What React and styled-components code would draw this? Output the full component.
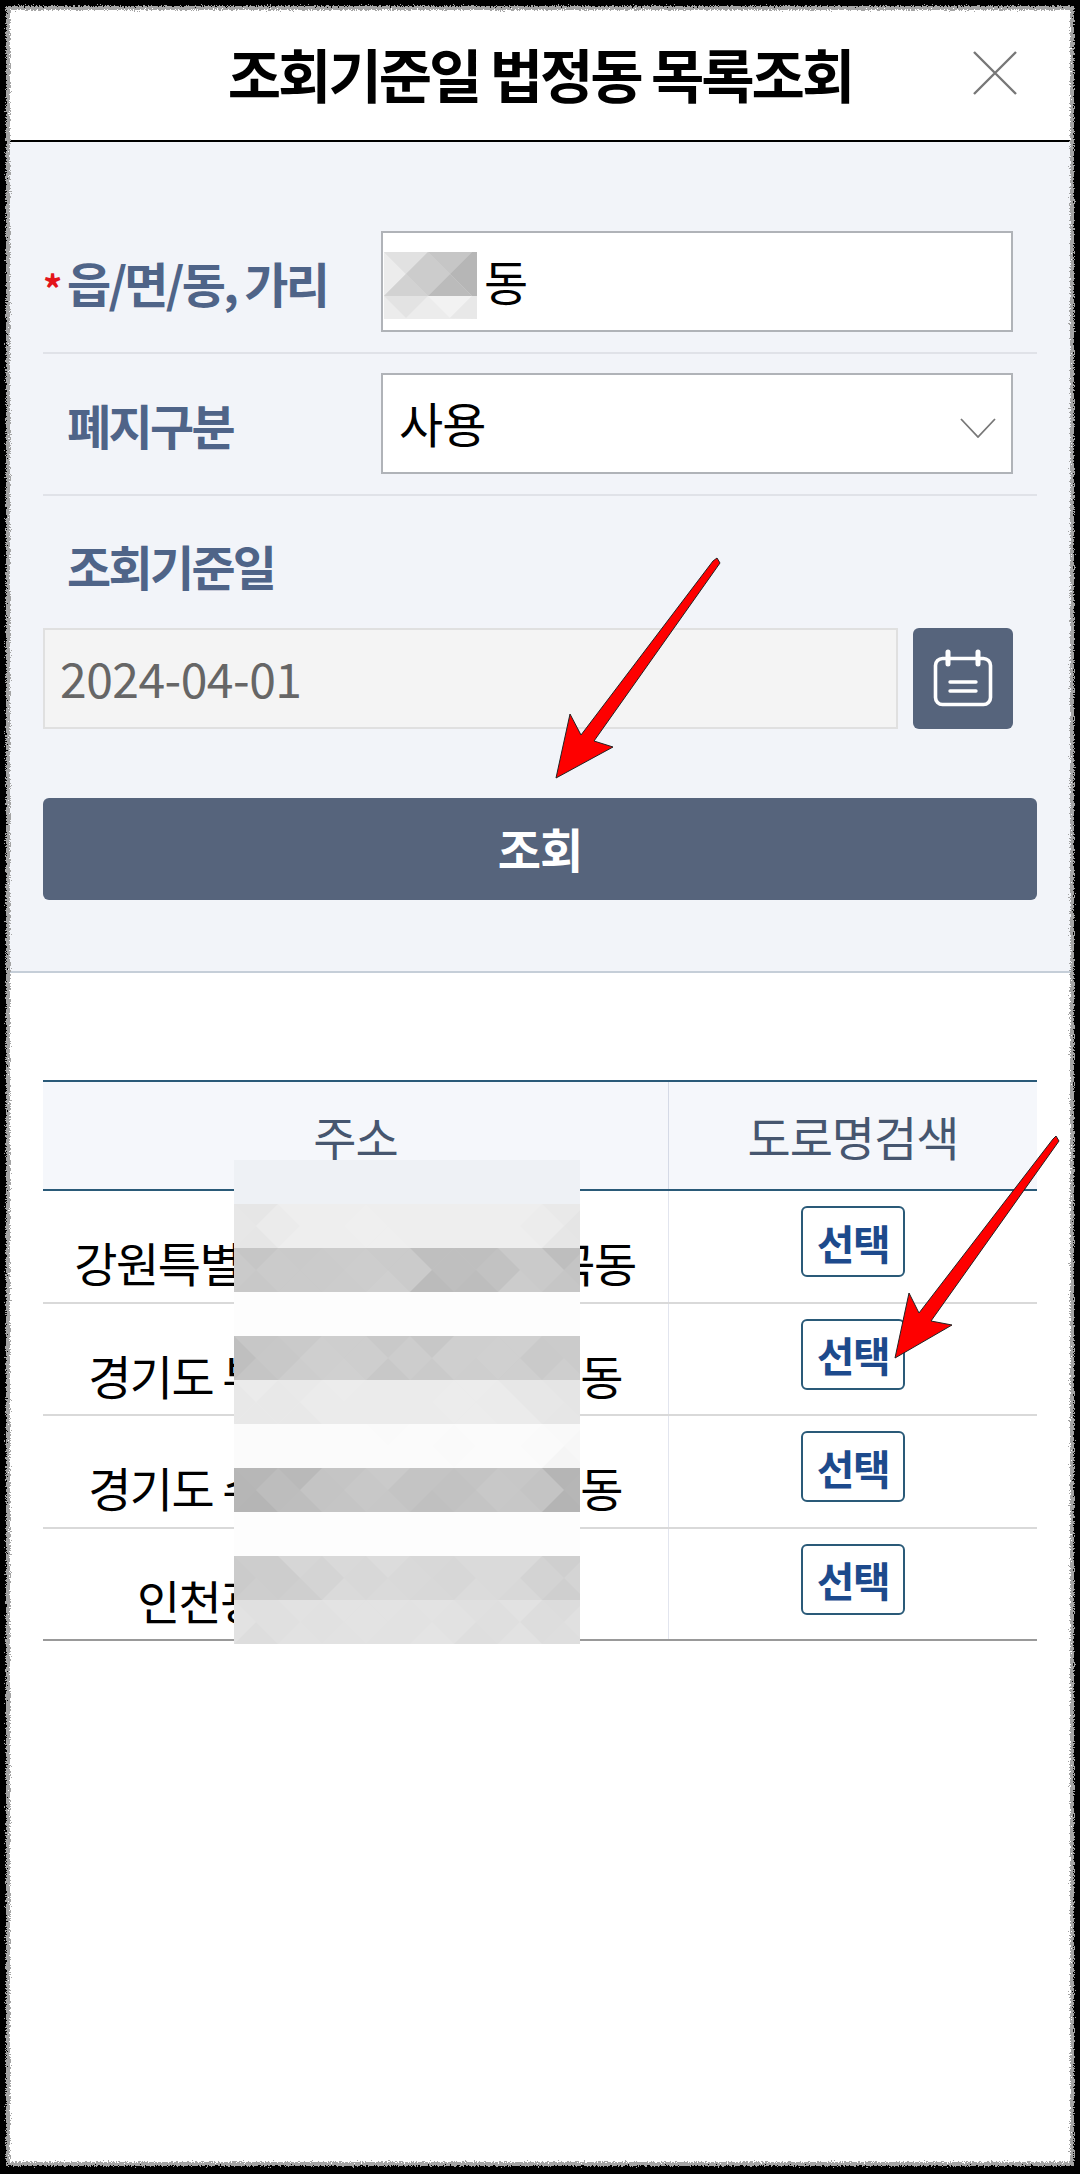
import React from 'react'
import styled, { createGlobalStyle } from 'styled-components'

const GlobalStyle = createGlobalStyle`
  html, body {
    margin: 0;
    padding: 0;
    background: #000;
    overflow: hidden;
  }
  * {
    box-sizing: border-box;
  }
`

const NAVY = '#56647c'
const LABEL = '#4f6488'
const LINE = '#e0e2e8'

const rows = [
  { head: '강원특별', gap: 311, tail: '곡동' },
  { head: '경기도 부', gap: 316, tail: '동' },
  { head: '경기도 수', gap: 316, tail: '동' },
  { head: '인천광', gap: 311, tail: '' },
]

// one tone per column of the redaction, -1 dark to 1 light
const tableBands = [
  { base: '#eef1f5', amp: 0, tones: [] },
  { base: '#eeeeee', amp: 0.06, tones: [-0.6, 0.2, 0.3, 0.4, 0.4, 0.3, 0.3, -0.6] },
  { base: '#cacaca', amp: 0.1, tones: [0, 0.1, 0.2, 0.4, -0.6, -0.9, 0.2, -0.4] },
  { base: '#fdfdfd', amp: 0.005, tones: [0, 0, 0, 0, 0, 0, 0, 0] },
  { base: '#cdcdcd', amp: 0.09, tones: [-0.7, -0.1, 0.4, 0, -0.1, 0.3, 0.3, -0.1] },
  { base: '#ebebeb', amp: 0.06, tones: [-0.2, -0.1, 0.3, 0.1, 0.2, 0.6, -0.2, -0.6] },
  { base: '#fbfbfb', amp: 0.04, tones: [0.2, 0.2, 0.2, 0.2, 0.2, 0.2, 0, -0.6] },
  { base: '#c4c4c4', amp: 0.1, tones: [-0.9, -0.4, 0.4, 0.5, -0.2, -0.1, 0.6, -0.7] },
  { base: '#fdfdfd', amp: 0.005, tones: [0, 0, 0, 0, 0, 0, 0, 0] },
  { base: '#d8d8d8', amp: 0.08, tones: [-0.6, -0.4, 0.3, 0.6, 0, 0.3, 0.3, -0.5] },
  { base: '#e2e2e2', amp: 0.06, tones: [-0.3, 0.1, 0.4, 0.2, 0.6, -0.4, 0.1, -0.3] },
]

const inputFacets = [
  ['0,0 93,0 93,44 0,44', '#d9d9d9'],
  ['0,0 44,0 22,22', '#e1e1e1'],
  ['0,0 22,22 0,44', '#ececec'],
  ['44,0 66,22 44,44 22,22', '#cccccc'],
  ['0,44 22,22 44,44', '#d2d2d2'],
  ['44,0 88,0 66,22', '#c6c6c6'],
  ['88,0 93,0 93,44 88,44 66,22', '#b6b6b6'],
  ['44,44 66,22 88,44', '#bbbbbb'],
  ['0,44 93,44 93,67 0,67', '#ececec'],
  ['0,44 44,44 22,66', '#e3e3e3'],
  ['44,44 88,44 66,66', '#f2f2f2'],
  ['88,44 93,44 93,67 66,66', '#e8e8e8'],
]

const noise = (a, b) => {
  const v = Math.sin(a * 12.9898 + b * 78.233) * 43758.5453
  return v - Math.floor(v)
}

// shaded diamonds, one row of them for each band
const Mosaic = ({ width, height, cell, bands }) => {
  const shade = (band, row, key, kind) => {
    const last = band.tones.length - 1
    const at = (i) => band.tones[Math.max(0, Math.min(last, i))]
    const tone = kind === 0 ? (at(key - 1) + at(key)) / 2 : at(key)
    const v = tone * 0.8 + (noise(row * 3 + kind, key) - 0.5) * 0.5
    return v > 0 ? `rgba(255,255,255,${v * band.amp * 2})` : `rgba(0,0,0,${-v * band.amp})`
  }
  const cols = Math.ceil(width / cell)
  return (
    <svg width={width} height={height} viewBox={`0 0 ${width} ${height}`}>
      {bands.map((band, r) => {
        const y = r * cell
        const parts = [<rect key="b" x="0" y={y} width={width} height={cell} fill={band.base} />]
        if (band.amp === 0) return <g key={r}>{parts}</g>
        for (let c = 0; c <= cols; c++) {
          const x = c * cell
          const mx = x + cell / 2
          const my = y + cell / 2
          parts.push(
            <polygon key={`t${c}`} points={`${x},${y} ${x + cell},${y} ${mx},${my}`} fill={shade(band, r, c, 1)} />,
            <polygon key={`u${c}`} points={`${x},${y + cell} ${x + cell},${y + cell} ${mx},${my}`} fill={shade(band, r, c, 2)} />,
            <polygon key={`l${c}`} points={`${x},${y} ${x},${y + cell} ${mx},${my}`} fill={shade(band, r, c, 0)} />,
            <polygon key={`r${c}`} points={`${x + cell},${y} ${x + cell},${y + cell} ${mx},${my}`} fill={shade(band, r, c + 1, 0)} />
          )
        }
        return <g key={r}>{parts}</g>
      })}
    </svg>
  )
}

const CalendarIcon = () => (
  <svg width="64" height="60" viewBox="0 0 64 60" fill="none" stroke="#fff">
    <rect x="4.5" y="9.5" width="55" height="46" rx="7" strokeWidth="3.6" />
    <path d="M17 3v12M47 3v12" strokeWidth="5" strokeLinecap="round" />
    <path d="M19 33h26M19 42h26" strokeWidth="3.4" strokeLinecap="round" />
  </svg>
)

const App = () => {
  return (
    <>
      <GlobalStyle />
      <Frame>
        <Header>
          <span />
          <Title>조회기준일 법정동 목록조회</Title>
          <CloseButton aria-label="닫기">
            <svg width="44" height="44" viewBox="0 0 44 44" fill="none" stroke="#777" strokeWidth="2.4">
              <path d="M1 1l42 42M43 1L1 43" />
            </svg>
          </CloseButton>
        </Header>

        <SearchPanel>
          <FormRow>
            <Label>
              <Star>*</Star>
              읍/면/동, 가리
            </Label>
            <Field>
              <FieldText $indent={101}>동</FieldText>
              <InputMosaic>
                <svg width="93" height="67" viewBox="0 0 93 67">
                  {inputFacets.map(([points, fill]) => (
                    <polygon key={points} points={points} fill={fill} />
                  ))}
                </svg>
              </InputMosaic>
            </Field>
          </FormRow>
          <FormRow $second>
            <Label>폐지구분</Label>
            <Field>
              <FieldText $indent={16}>사용</FieldText>
              <Chevron width="36" height="20" viewBox="0 0 36 20" fill="none" stroke="#777" strokeWidth="1.8">
                <path d="M1 1l17 18L35 1" />
              </Chevron>
            </Field>
          </FormRow>
          <DateLabel>조회기준일</DateLabel>
          <DateRow>
            <DateField>2024-04-01</DateField>
            <CalendarButton aria-label="달력">
              <CalendarIcon />
            </CalendarButton>
          </DateRow>
          <SearchButton>조회</SearchButton>
        </SearchPanel>

        <Table>
          <HeadRow>
            <AddressHead>주소</AddressHead>
            <RoadHead>도로명검색</RoadHead>
          </HeadRow>
          {rows.map((row, i) => (
            <BodyRow key={row.head} $last={i === rows.length - 1}>
              <AddressCell>
                {row.head}
                <Hidden $width={row.gap} />
                {row.tail}
              </AddressCell>
              <ActionCell>
                <PickButton>선택</PickButton>
              </ActionCell>
            </BodyRow>
          ))}
        </Table>

        <TableMosaic>
          <Mosaic width={346} height={484} cell={44} bands={tableBands} />
        </TableMosaic>

        <RoughEdge />
        <Arrows viewBox="0 0 1080 2174" width="1080" height="2174">
          <defs>
            <filter id="rough-edge" x="0" y="0" width="100%" height="100%">
              <feTurbulence type="fractalNoise" baseFrequency="0.7" numOctaves="2" seed="4" />
              <feDisplacementMap in="SourceGraphic" scale="6" xChannelSelector="R" yChannelSelector="G" />
            </filter>
          </defs>
          <polygon points="713,561 717,558 720,563 594,741 613,747 556,778 570,714 581,735" />
          <polygon points="1053,1139 1056,1136 1059,1141 931,1321 952,1325 895,1358 909,1293 919,1313" />
        </Arrows>
      </Frame>
    </>
  )
}

const Frame = styled.div`
  position: relative;
  margin: 6px;
  height: 2160px;
  background: #fff;
  font-family: 'Noto Sans CJK KR', 'Noto Sans', sans-serif;
`

const RoughEdge = styled.div`
  position: absolute;
  inset: -6px;
  border: 6px solid #000;
  box-shadow: inset 0 0 0 4px #a4a4a4;
  filter: url(#rough-edge);
  pointer-events: none;
`

const Header = styled.header`
  display: grid;
  grid-template-columns: 1fr auto 1fr;
  align-items: center;
  height: 136px;
  border-bottom: 2px solid #000;
`

const Title = styled.h1`
  margin: 0;
  font-size: 58px;
  font-weight: 700;
  letter-spacing: -3px;
  line-height: 1;
  color: #000;
`

const CloseButton = styled.button`
  justify-self: end;
  display: flex;
  margin-right: 57px;
  padding: 0;
  border: 0;
  background: none;
`

const SearchPanel = styled.section`
  height: 831px;
  padding: 89px 37px 0;
  background: #f2f4f9;
  border-bottom: 2px solid #c5ced8;
`

const FormRow = styled.div`
  display: flex;
  align-items: center;
  padding: ${({ $second }) => ($second ? '19px 24px 20px 0' : '0 24px 20px 0')};
  border-bottom: 2px solid ${LINE};
`

const Label = styled.div`
  position: relative;
  flex: 0 0 338px;
  padding-left: 24px;
  font-size: 48px;
  font-weight: 700;
  letter-spacing: -2.7px;
  line-height: 60px;
  color: ${LABEL};
`

const Star = styled.span`
  position: absolute;
  left: 0;
  top: 6px;
  font-size: 38px;
  color: #e3141b;
`

const Field = styled.div`
  position: relative;
  flex: 1;
  display: flex;
  align-items: center;
  height: 101px;
  padding-bottom: 3px;
  background: #fff;
  border: 2px solid #b0b3b8;
`

const FieldText = styled.span`
  padding-left: ${({ $indent }) => $indent}px;
  font-size: 48px;
  letter-spacing: -1px;
  color: #000;
`

const InputMosaic = styled.div`
  position: absolute;
  left: 1px;
  top: 19px;
  display: flex;
`

const Chevron = styled.svg`
  position: absolute;
  right: 15px;
  top: 43px;
`

const DateLabel = styled(Label)`
  margin-top: 39px;
  margin-bottom: 33px;
`

const DateRow = styled.div`
  display: flex;
  gap: 15px;
  height: 101px;
  padding-right: 24px;
`

const DateField = styled.div`
  flex: 0 0 855px;
  display: flex;
  align-items: center;
  padding: 0 0 3px 15px;
  font-size: 48px;
  letter-spacing: -0.5px;
  color: #666;
  background: #f4f4f4;
  border: 2px solid #e0e0e0;
`

const CalendarButton = styled.button`
  flex: 1;
  display: flex;
  align-items: center;
  justify-content: center;
  padding: 0;
  border: 0;
  border-radius: 6px;
  background: ${NAVY};
`

const SearchButton = styled.button`
  display: block;
  width: 100%;
  height: 102px;
  margin-top: 69px;
  padding: 0 0 3px;
  border: 0;
  border-radius: 6px;
  background: ${NAVY};
  font-family: inherit;
  font-size: 47px;
  font-weight: 700;
  letter-spacing: -1px;
  color: #fff;
`

const Table = styled.div`
  margin: 107px 37px 0;
  border-top: 2px solid #2a5a78;
`

const HeadRow = styled.div`
  display: grid;
  grid-template-columns: 626px 1fr;
  height: 109px;
  background: #f5f7fb;
  border-bottom: 2px solid #2a5a78;
`

const AddressHead = styled.div`
  display: flex;
  align-items: center;
  justify-content: center;
  font-size: 47px;
  letter-spacing: -1px;
  color: #46566f;
  border-right: 1px solid #d5dae6;
`

const RoadHead = styled(AddressHead)`
  border-right: 0;
`

const BodyRow = styled.div`
  display: grid;
  grid-template-columns: 626px 1fr;
  height: 112.6px;
  border-bottom: 2px solid ${({ $last }) => ($last ? '#999' : '#d9d9d9')};
`

const AddressCell = styled.div`
  display: flex;
  justify-content: center;
  padding-top: 41px;
  padding-right: 1px;
  white-space: pre;
  font-size: 47px;
  letter-spacing: -1.5px;
  line-height: 60px;
  color: #000;
  border-right: 1px solid #e2e5ee;
`

const Hidden = styled.span`
  flex: 0 0 ${({ $width }) => $width}px;
`

const ActionCell = styled.div`
  display: flex;
  justify-content: center;
  padding-top: 15px;
`

const PickButton = styled.button`
  width: 104px;
  height: 71px;
  padding: 0;
  background: #fff;
  border: 2px solid #2a5a78;
  border-radius: 6px;
  font-family: inherit;
  font-size: 41px;
  font-weight: 700;
  letter-spacing: -1.5px;
  color: #1d4a8c;
`

const TableMosaic = styled.div`
  position: absolute;
  left: 228px;
  top: 1154px;
  display: flex;
`

const Arrows = styled.svg`
  position: absolute;
  left: -6px;
  top: -6px;
  pointer-events: none;

  polygon {
    fill: #fe0000;
    stroke: #222;
    stroke-width: 1;
    stroke-linejoin: round;
  }
`

export default App
